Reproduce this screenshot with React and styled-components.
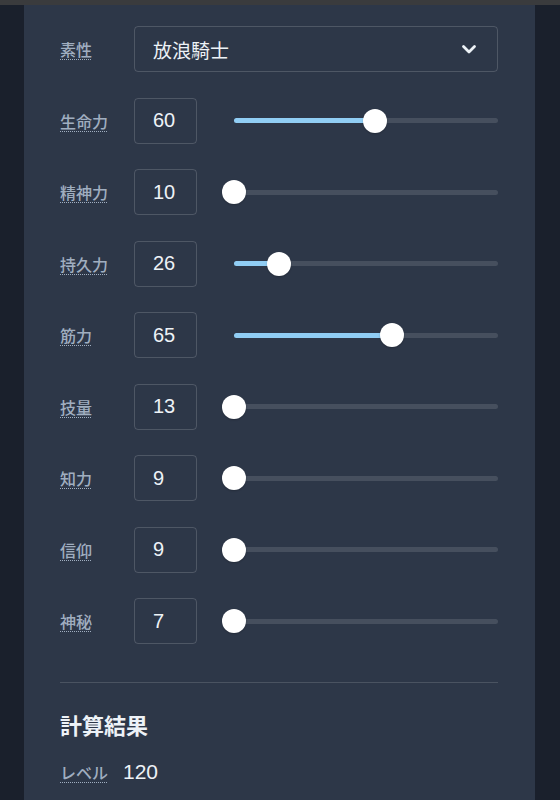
import React from "react";
import styled, { createGlobalStyle } from "styled-components";

const Global = createGlobalStyle`
  body {
    margin: 0;
    background: #1a202c;
    font-family: "Liberation Sans", "Noto Sans CJK JP", sans-serif;
    color: #edf2f7;
  }
`;

const TopBar = styled.div`
  height: 5px;
  background: #3a3b3d;
`;

const Panel = styled.div`
  margin-left: 24px;
  width: 511px;
  box-sizing: border-box;
  padding: 21px 37px 40px 36px;
  background: #2d3748;
  min-height: 795px;
`;

const Rows = styled.div`
  display: flex;
  flex-direction: column;
  gap: 25.5px;
`;

const Row = styled.div`
  display: flex;
  align-items: center;
  height: 46px;
`;

const Label = styled.abbr`
  width: 74px;
  flex-shrink: 0;
  font-size: 16px;
  font-weight: 500;
  color: #a0aec0;
  text-decoration: underline dotted;
  text-underline-offset: 3px;
  text-decoration-thickness: 1px;
  cursor: help;
`;

const SelectBox = styled.div`
  flex: 1;
  height: 46px;
  box-sizing: border-box;
  border: 1px solid rgba(255, 255, 255, 0.16);
  border-radius: 4px;
  display: flex;
  align-items: center;
  justify-content: space-between;
  padding: 0 20px 0 18px;
  font-size: 19px;
  color: #edf2f7;
`;

const NumBox = styled.div`
  width: 63px;
  height: 46px;
  box-sizing: border-box;
  border: 1px solid rgba(255, 255, 255, 0.16);
  border-radius: 4px;
  display: flex;
  align-items: center;
  padding-left: 18px;
  font-size: 20px;
  color: #edf2f7;
  flex-shrink: 0;
`;

const SliderWrap = styled.div`
  margin-left: 37px;
  flex: 1;
  height: 24px;
  display: flex;
  align-items: center;
`;

const Track = styled.div`
  width: 100%;
  height: 5px;
  border-radius: 3px;
  background: rgba(255, 255, 255, 0.12);
  position: relative;
`;

const Fill = styled.div`
  position: absolute;
  left: 0;
  top: 0;
  bottom: 0;
  border-radius: 3px;
  background: #90cdf4;
`;

const Thumb = styled.div`
  position: absolute;
  top: 50%;
  width: 24px;
  height: 24px;
  margin: -12px 0 0 -12px;
  border-radius: 50%;
  background: #ffffff;
  box-shadow: 0 1px 2px rgba(0, 0, 0, 0.2);
`;

const Divider = styled.hr`
  border: none;
  border-top: 1px solid rgba(255, 255, 255, 0.14);
  margin: 38px 0 0;
`;

const Heading = styled.h2`
  margin: 25px 0 0;
  font-size: 22px;
  font-weight: bold;
  color: #edf2f7;
`;

const ResultRow = styled.div`
  display: flex;
  align-items: baseline;
  gap: 15px;
  margin-top: 20px;
`;

const ResultLabel = styled(Label)`
  width: auto;
`;

const ResultValue = styled.span`
  font-size: 21px;
  color: #edf2f7;
`;

const stats = [
  { name: "生命力", value: 60, min: 15 },
  { name: "精神力", value: 10, min: 10 },
  { name: "持久力", value: 26, min: 11 },
  { name: "筋力", value: 65, min: 14 },
  { name: "技量", value: 13, min: 13 },
  { name: "知力", value: 9, min: 9 },
  { name: "信仰", value: 9, min: 9 },
  { name: "神秘", value: 7, min: 7 },
];

function Slider({ value, min }) {
  const pct = ((value - min) / (99 - min)) * 100;
  return (
    <SliderWrap>
      <Track>
        <Fill style={{ width: `${pct}%` }} />
        <Thumb style={{ left: `${pct}%` }} />
      </Track>
    </SliderWrap>
  );
}

export default function App() {
  return (
    <>
      <Global />
      <TopBar />
      <Panel>
        <Rows>
          <Row>
            <Label title="素性">素性</Label>
            <SelectBox>
              <span>放浪騎士</span>
              <svg width="16" height="11" viewBox="0 0 16 11">
                <path
                  d="M2.5 2.5l5.5 5.5 5.5-5.5"
                  fill="none"
                  stroke="#edf2f7"
                  strokeWidth="2.8"
                  strokeLinecap="round"
                  strokeLinejoin="round"
                />
              </svg>
            </SelectBox>
          </Row>
          {stats.map((s) => (
            <Row key={s.name}>
              <Label title={s.name}>{s.name}</Label>
              <NumBox>{s.value}</NumBox>
              <Slider value={s.value} min={s.min} />
            </Row>
          ))}
        </Rows>
        <Divider />
        <Heading>計算結果</Heading>
        <ResultRow>
          <ResultLabel title="レベル">レベル</ResultLabel>
          <ResultValue>120</ResultValue>
        </ResultRow>
      </Panel>
    </>
  );
}
